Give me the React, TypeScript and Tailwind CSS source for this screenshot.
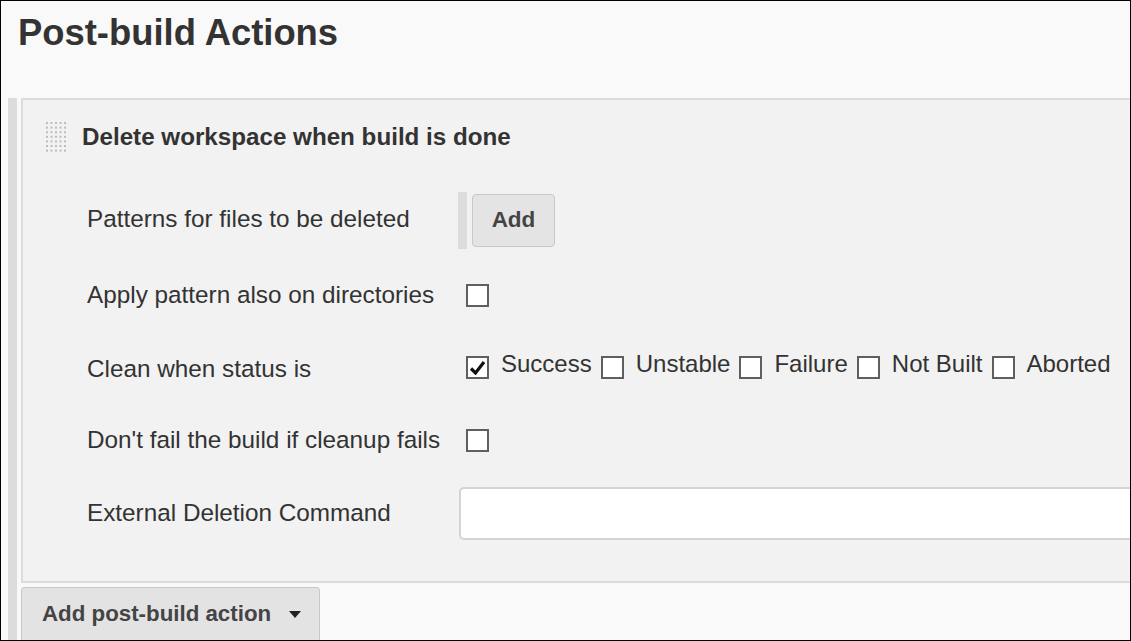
import React from "react";

function Box({ checked = false }: { checked?: boolean }) {
  return (
    <span className="w-[23px] h-[23px] shrink-0 border-2 border-[#5f5f5f] bg-white flex items-center justify-center">
      {checked && (
        <svg width="17" height="15" viewBox="0 0 17 15">
          <path d="M2 8.5 L6.5 13 L15 2" fill="none" stroke="#111" strokeWidth="3.2" />
        </svg>
      )}
    </span>
  );
}

function Grip() {
  const dots = [];
  for (let r = 0; r < 7; r++) {
    for (let c = 0; c < 5; c++) {
      dots.push(<rect key={r + "-" + c} x={1 + c * 4.5} y={1 + r * 4.6} width="2" height="2" fill="#bdbdbd" />);
    }
  }
  return (
    <svg width="22" height="33" viewBox="0 0 22 33" className="shrink-0">
      {dots}
    </svg>
  );
}

const statuses = [
  { name: "Success", on: true },
  { name: "Unstable", on: false },
  { name: "Failure", on: false },
  { name: "Not Built", on: false },
  { name: "Aborted", on: false },
];

export default function App() {
  return (
    <div
      className="w-[1131px] h-[641px] border border-black bg-[#f9f9f9] overflow-hidden flex flex-col text-[#333]"
      style={{ fontFamily: '"Liberation Sans", Arial, sans-serif' }}
    >
      <div className="h-[97px] shrink-0 pl-[17px] pt-[14px]">
        <h1 className="text-[36.4px] leading-[36px] font-bold">Post-build Actions</h1>
      </div>

      <div className="flex flex-1 min-h-0">
        <div className="ml-[7px] w-[9px] shrink-0 bg-[#dcdcdc]" />

        <div className="ml-[4px] flex-1 min-w-0 flex flex-col">
          <section className="h-[485px] shrink-0 border-l-2 border-t-2 border-b-2 border-[#dcdcdc] bg-[#f2f2f2] flex flex-col">
            <div className="h-[74px] flex items-center pl-[22px] gap-[15px]">
              <Grip />
              <span className="text-[24.2px] leading-none font-bold">Delete workspace when build is done</span>
            </div>

            <div className="mt-[18px] h-[57px] flex items-center pl-[64px] text-[24.3px] leading-none">
              <div className="w-[371px] shrink-0 -mt-[2px]">Patterns for files to be deleted</div>
              <div className="flex items-center h-full">
                <div className="w-[9px] h-full bg-[#dcdcdc]" />
                <button className="ml-[5px] w-[83px] h-[53px] rounded-[4px] border border-[#c8c8c8] bg-[#e4e4e4] text-[22.5px] font-bold text-[#444]">
                  Add
                </button>
              </div>
            </div>

            <div className="mt-[34px] h-[24px] flex items-center pl-[64px] text-[24.3px] leading-none">
              <div className="w-[371px] shrink-0">Apply pattern also on directories</div>
              <span className="ml-[8px]"><Box /></span>
            </div>

            <div className="mt-[48px] h-[24px] flex items-center pl-[64px] text-[24.3px] leading-none">
              <div className="w-[371px] shrink-0 pt-[5px]">Clean when status is</div>
              <div className="ml-[8px] flex items-center text-[24px]">
                {statuses.map((s) => (
                  <div key={s.name} className="flex items-center mr-[9px]">
                    <Box checked={s.on} />
                    <span className="ml-[12px] -mt-[7px] whitespace-nowrap">{s.name}</span>
                  </div>
                ))}
              </div>
            </div>

            <div className="mt-[49px] h-[24px] flex items-center pl-[64px] text-[24.3px] leading-none">
              <div className="w-[371px] shrink-0">Don't fail the build if cleanup fails</div>
              <span className="ml-[8px]"><Box /></span>
            </div>

            <div className="mt-[35px] h-[53px] flex items-center pl-[64px] text-[24.3px] leading-none">
              <div className="w-[371px] shrink-0">External Deletion Command</div>
              <input className="ml-[1px] flex-1 h-[53px] rounded-l-[5px] border-2 border-r-0 border-[#d4d4d4] bg-white outline-none" />
            </div>
          </section>

          <div className="mt-[4px]">
            <button className="w-[299px] h-[58px] pb-[5px] rounded-t-[4px] border border-b-0 border-[#c8c8c8] bg-[#e3e3e3] flex items-center pl-[20px] text-[22.3px] font-bold text-[#444]">
              Add post-build action
              <svg width="12" height="7" viewBox="0 0 12 7" className="ml-[18px]">
                <path d="M0 0 H12 L6 7 Z" fill="#222" />
              </svg>
            </button>
          </div>
        </div>
      </div>
    </div>
  );
}
